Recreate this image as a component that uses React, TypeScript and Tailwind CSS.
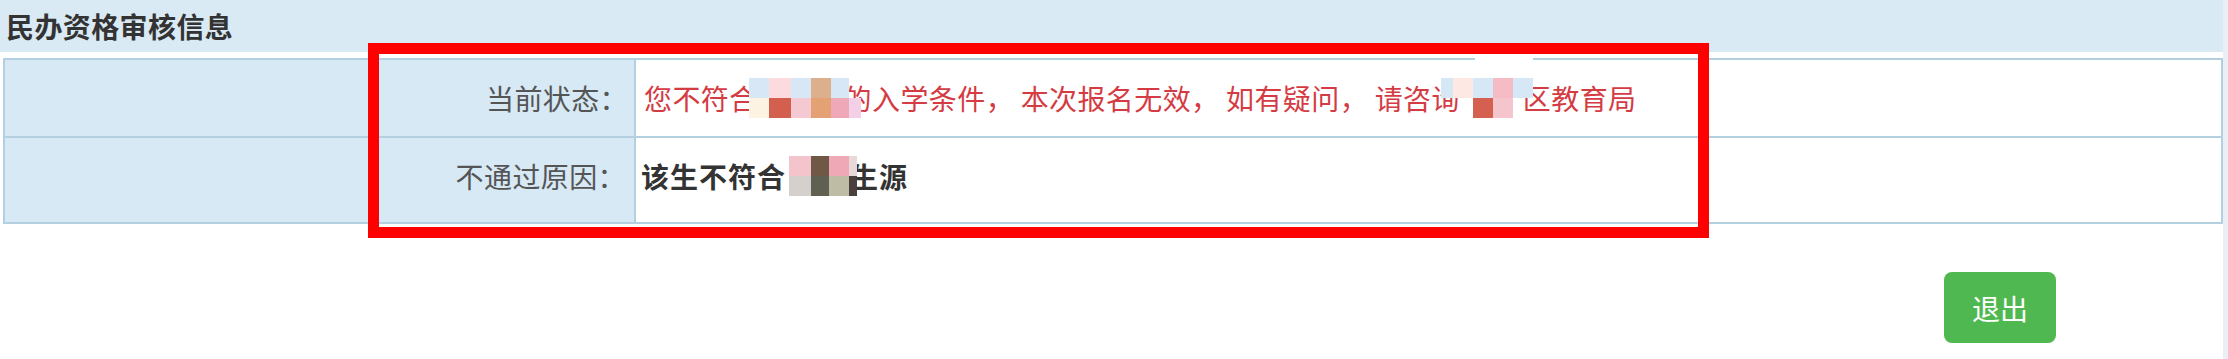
import React from "react";

const font = { fontFamily: '"Noto Sans CJK SC", "Noto Sans", sans-serif' };

// each column: [width, top colour, bottom colour]
type Col = [number, string, string];

function Mosaic({ cols, className, children }: { cols: Col[]; className?: string; children?: React.ReactNode }) {
  return (
    <span className={`relative z-10 inline-flex align-middle ${className ?? ""}`}>
      {cols.map(([w, top, bottom], i) => (
        <span key={i} className="flex flex-col">
          <span className="block h-[20px]" style={{ width: w, background: top }} />
          <span className="block h-[20px]" style={{ width: w, background: bottom }} />
        </span>
      ))}
      {children}
    </span>
  );
}

const Comma = () => <span className="inline-block w-[35px]">，</span>;

export default function App() {
  return (
    <div className="flex h-[359px] w-[2228px] bg-white text-[#333]" style={font}>
      <div className="relative w-[2223px]">
        <div className="flex h-[52px] items-center bg-[#d9eaf5] pl-[6px] text-[28px] font-bold tracking-[0.4px] text-[#333]">
          民办资格审核信息
        </div>

        <div className="ml-[3px] mt-[6px] border-2 border-[#b4cfe0]">
          <div className="flex h-[78px] border-b-2 border-[#b4cfe0]">
            <div className="flex w-[631px] items-center justify-end border-r-2 border-[#b4cfe0] bg-[#d6e9f5] pr-[6px] text-[28px] tracking-[0.4px] text-[#555]">
              当前状态：
            </div>
            <div className="flex flex-1 items-center whitespace-nowrap pl-[8px] text-[28px] tracking-[0.4px] text-[#d43b43]">
              您不符合
              <Mosaic
                className="-ml-[9px] -mr-[17px]"
                cols={[
                  [20, "#d7e7f6", "#fdf3e2"],
                  [22, "#fcdadd", "#d3604f"],
                  [20, "#d7e7f6", "#f5c9d1"],
                  [20, "#dcb08c", "#e4a274"],
                  [18, "#d7e7f6", "#eea8b8"],
                  [12, "transparent", "#f3d0e7"],
                ]}
              />
              的入学条件<Comma />本次报名无效<Comma />如有疑问<Comma />请咨询
              <Mosaic
                className="-ml-[19px] -mr-[10px]"
                cols={[
                  [12, "#d6e7f6", "transparent"],
                  [20, "#fde8e4", "transparent"],
                  [20, "#d6e7f6", "#d5604f"],
                  [20, "#f6bcc6", "#f4c5cc"],
                  [20, "#d6e7f6", "transparent"],
                ]}
              >
                <span className="absolute -top-[22px] left-[34px] h-[22px] w-[58px] bg-white" />
              </Mosaic>
              区教育局
            </div>
          </div>
          <div className="flex h-[84px]">
            <div className="flex w-[631px] items-center justify-end border-r-2 border-[#b4cfe0] bg-[#d6e9f5] pb-[8px] pr-[8px] text-[28px] tracking-[0.4px] text-[#555]">
              不通过原因：
            </div>
            <div className="flex flex-1 items-center whitespace-nowrap pb-[8px] pl-[5px] text-[28px] font-bold tracking-[1px] text-[#333]">
              该生不符合
              <Mosaic
                className="-mr-[7px] ml-[3px]"
                cols={[
                  [22, "#f4c4cc", "#d5d0cb"],
                  [18, "#6f5946", "#5f6052"],
                  [20, "#efa8b6", "#bfbca6"],
                  [8, "#e8d8da", "#4a403e"],
                ]}
              />
              生源
            </div>
          </div>
        </div>

        <div className="mt-[48px] flex justify-end pr-[167px]">
          <button className="flex h-[71px] w-[112px] items-center justify-center rounded-[8px] bg-[#50b850] text-[28px] text-white">
            退出
          </button>
        </div>

        <div className="pointer-events-none absolute left-[368px] top-[43px] h-[195px] w-[1341px] border-[11px] border-[#ff0000]" />
      </div>
      <div className="w-[5px] bg-[#e9eff4]" />
    </div>
  );
}
